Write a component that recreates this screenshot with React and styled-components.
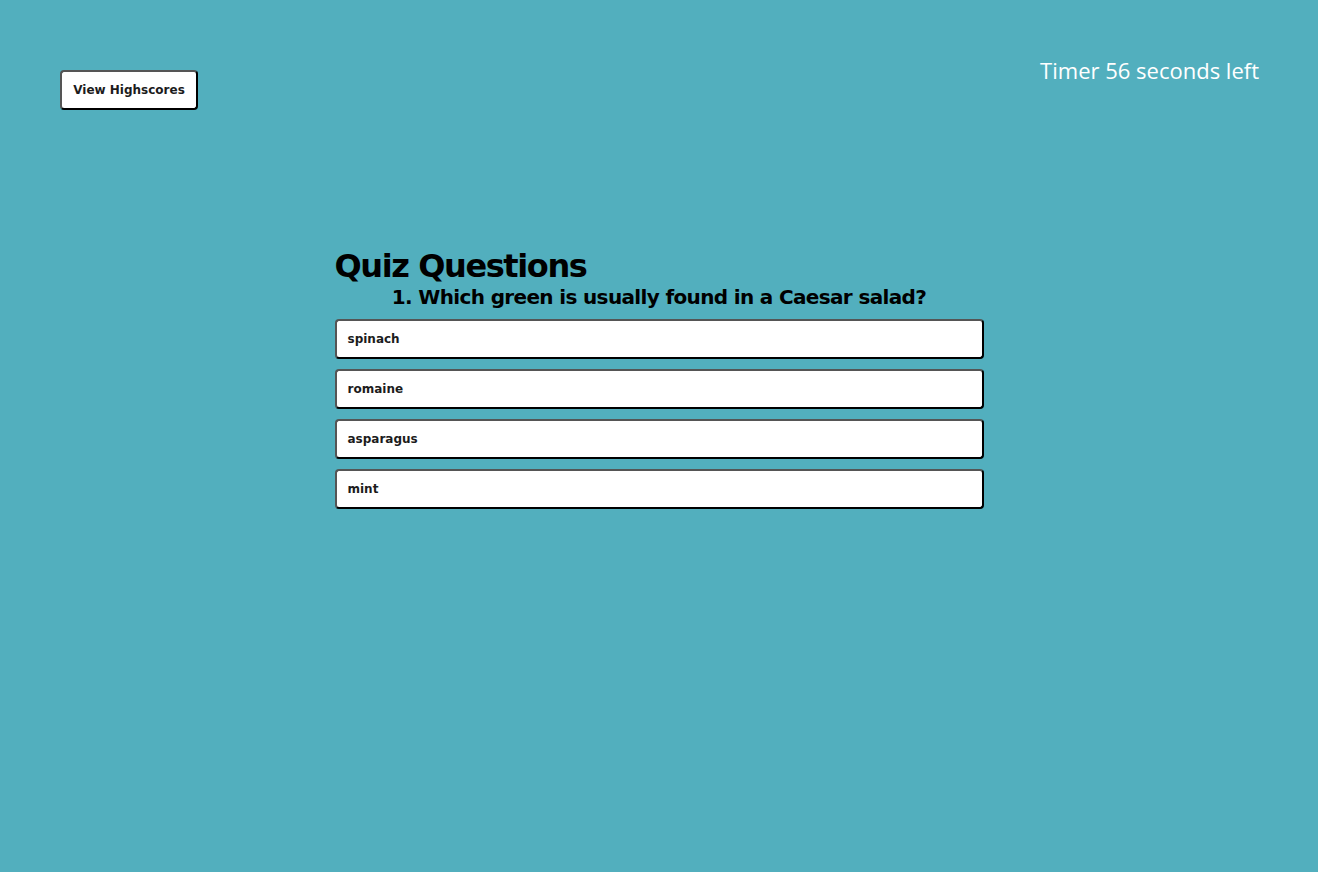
import React from 'react'
import styled, { createGlobalStyle } from 'styled-components'

const Global = createGlobalStyle`
body {
  margin: 0;
  background: #52afbe;
  font-family: "DejaVu Sans", Verdana, sans-serif;
  min-height: 872px;
}
`
const Header = styled.header`
display: flex;
justify-content: space-between;
align-items: flex-start;
padding: 70px 59px 0 60px;
`
const ScoreButton = styled.button`
height: 40px;
width: 138px;
background: #fff;
border: 2px outset #555;
border-right-color: #000;
border-bottom-color: #000;
border-radius: 4px;
font-family: "DejaVu Sans", Verdana, sans-serif;
font-weight: bold;
font-size: 12px;
color: #1c1c1c;
`
const Timer = styled.div`
color: #fff;
font-family: "Open Sans", "Noto Sans", sans-serif;
font-size: 22px;
margin-top: -15px;
`
const Quiz = styled.main`
width: 649px;
margin: 138px auto 0;
`
const Title = styled.h1`
margin: 0;
font-size: 32px;
letter-spacing: -1.4px;
line-height: 36px;
`
const Question = styled.h3`
margin: 0 0 9px;
text-align: center;
font-size: 20px;
letter-spacing: -0.65px;
line-height: 26px;
`
const Choices = styled.div`
display: flex;
flex-direction: column;
gap: 10px;
`
const Choice = styled.button`
height: 40px;
width: 100%;
text-align: left;
padding: 0 11px;
background: #fff;
border: 2px outset #555;
border-right-color: #000;
border-bottom-color: #000;
border-radius: 4px;
font-family: "DejaVu Sans", Verdana, sans-serif;
font-weight: bold;
font-size: 12px;
color: #1c1c1c;
`

const answers = ['spinach', 'romaine', 'asparagus', 'mint']

const App = () => {
  return (
    <>
      <Global />
      <Header>
        <ScoreButton>View Highscores</ScoreButton>
        <Timer>Timer 56 seconds left</Timer>
      </Header>
      <Quiz>
        <Title>Quiz Questions</Title>
        <Question>1. Which green is usually found in a Caesar salad?</Question>
        <Choices>
          {answers.map(a => <Choice key={a}>{a}</Choice>)}
        </Choices>
      </Quiz>
    </>
  )
}
export default App
